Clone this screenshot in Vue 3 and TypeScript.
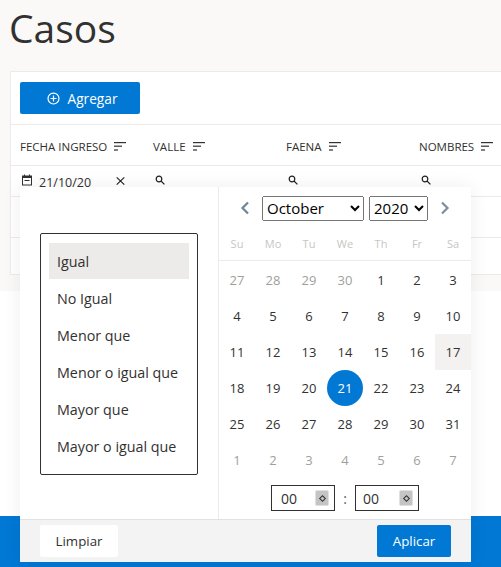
<script setup lang="ts">
const columns: string[] = ['FECHA INGRESO', 'VALLE', 'FAENA', 'NOMBRES']
const operators: string[] = ['Igual', 'No Igual', 'Menor que', 'Menor o igual que', 'Mayor que', 'Mayor o igual que']
const weekdays: string[] = ['Su', 'Mo', 'Tu', 'We', 'Th', 'Fr', 'Sa']
const months: string[] = ['January', 'February', 'March', 'April', 'May', 'June', 'July', 'August', 'September', 'October', 'November', 'December']
const years: number[] = [2018, 2019, 2020, 2021, 2022]

interface Day { n: number; muted: boolean; selected: boolean; today: boolean }
const days: Day[] = [
  ...[27, 28, 29, 30].map((n) => ({ n, muted: true, selected: false, today: false })),
  ...Array.from({ length: 31 }, (_, i) => ({ n: i + 1, muted: false, selected: i + 1 === 21, today: i + 1 === 17 })),
  ...[1, 2, 3, 4, 5, 6, 7].map((n) => ({ n, muted: true, selected: false, today: false })),
]
</script>

<template>
  <div class="page">
    <section class="top">
      <h1 class="title">Casos</h1>
      <div class="card">
        <div class="toolbar">
          <button class="btn primary add">
            <svg width="13" height="13" viewBox="0 0 14 14" fill="none" stroke="currentColor" stroke-width="1.3">
              <circle cx="7" cy="7" r="5.9" />
              <path d="M7 3.8v6.4M3.8 7h6.4" />
            </svg>
            Agregar
          </button>
        </div>
        <div class="row head">
          <div v-for="c in columns" :key="c" class="cell">
            <span>{{ c }}</span>
            <svg class="sort" width="12" height="9" viewBox="0 0 12 9" fill="#323130">
              <rect x="0" y="0" width="12" height="1.2" />
              <rect x="0" y="3.6" width="8" height="1.2" />
              <rect x="0" y="7.4" width="4" height="1.2" />
            </svg>
          </div>
        </div>
        <div class="row filter">
          <div class="cell date">
            <svg width="10" height="12" viewBox="0 0 10 12" fill="none">
              <rect x="0.5" y="2" width="9" height="9" stroke="#323130" stroke-width="1" />
              <rect x="0.5" y="2" width="9" height="2" fill="#323130" />
              <path d="M2.5 .5v1.5M7.5 .5v1.5" stroke="#323130" />
              <path d="M2.5 6.5h5" stroke="#323130" stroke-width="1" />
            </svg>
            <span class="date-text">21/10/20</span>
            <svg class="clear" width="9" height="8" viewBox="0 0 9 8" stroke="#201f1e" stroke-width="1.1">
              <path d="M.7.4l7.6 7.2M8.3.4L.7 7.6" />
            </svg>
          </div>
          <div v-for="i in 3" :key="i" class="cell">
            <svg class="search" width="10" height="10" viewBox="0 0 10 10" fill="none" stroke="#201f1e" stroke-width="1.2">
              <circle cx="4" cy="4" r="2.8" />
              <path d="M6 6l3.4 3.4" />
            </svg>
          </div>
        </div>
        <div class="row blank"></div>
        <div class="row last"></div>
      </div>
    </section>
    <section class="middle"></section>
    <section class="bar"></section>

    <div class="popup">
      <div class="popup-body">
        <div class="ops-pane">
          <ul class="ops">
            <li v-for="(o, i) in operators" :key="o" :class="{ active: i === 0 }">{{ o }}</li>
          </ul>
        </div>
        <div class="cal">
          <div class="nav">
            <svg width="10" height="14" viewBox="0 0 10 14" fill="none" stroke="#6f8699" stroke-width="2.2">
              <path d="M8 1.5L2.5 7 8 12.5" />
            </svg>
            <select class="month">
              <option v-for="(m, i) in months" :key="m" :selected="i === 9">{{ m }}</option>
            </select>
            <select class="year">
              <option v-for="y in years" :key="y" :selected="y === 2020">{{ y }}</option>
            </select>
            <svg width="10" height="14" viewBox="0 0 10 14" fill="none" stroke="#7d8f9e" stroke-width="2.2">
              <path d="M2 1.5L7.5 7 2 12.5" />
            </svg>
          </div>
          <div class="weekdays">
            <span v-for="w in weekdays" :key="w">{{ w }}</span>
          </div>
          <div class="days">
            <span
              v-for="(d, i) in days"
              :key="i"
              class="day"
              :class="{ muted: d.muted, selected: d.selected, today: d.today }"
            >{{ d.n }}</span>
          </div>
          <div class="time">
            <div class="spin hours"><span>00</span><i class="stepper"><b></b></i></div>
            <span class="colon">:</span>
            <div class="spin minutes"><span>00</span><i class="stepper"><b></b></i></div>
          </div>
        </div>
      </div>
      <div class="footer">
        <button class="btn plain">Limpiar</button>
        <button class="btn primary apply">Aplicar</button>
      </div>
    </div>
  </div>
</template>

<style>
html, body { margin: 0; padding: 0; }
</style>

<style scoped>
.page {
  position: relative;
  width: 501px;
  height: 567px;
  overflow: hidden;
  display: flex;
  flex-direction: column;
  font-family: "Open Sans", "Noto Sans", sans-serif;
  color: #323130;
  font-size: 14px;
  background: #fff;
}
.top { height: 291px; box-sizing: border-box; background: #faf9f8; padding: 0 0 0 10px; overflow: hidden; }
.title { margin: 0 0 0 -1px; height: 71px; box-sizing: border-box; font-size: 39px; font-weight: 400; line-height: 56px; }
.middle { height: 225px; background: #fff; }
.bar { flex: 1; background: #0078d4; }
.card { width: 560px; height: 204px; box-sizing: border-box; background: #fff; border: 1px solid #edebe9; }
.toolbar { height: 52px; box-sizing: border-box; padding: 10px 0 0 9px; }
.btn { border: 0; border-radius: 2px; font: inherit; display: inline-flex; align-items: center; justify-content: center; height: 32px; padding: 0; }
.primary { background: #0078d4; color: #fff; }
.add { width: 120px; gap: 8px; padding-left: 4px; box-sizing: border-box; font-size: 13.7px; }
.row { display: grid; grid-template-columns: repeat(4, 133px); border-top: 1px solid #edebe9; box-sizing: border-box; padding-left: 9px; }
.cell { display: flex; align-items: center; min-width: 0; }
.head { height: 41px; font-size: 11.5px; white-space: nowrap; }
.head .cell { padding-top: 2px; }
.sort { margin-left: 7px; }
.filter { height: 31px; font-size: 12.5px; }
.filter .cell { padding: 0 0 3px 2px; }
.date-text { margin: 6px 0 0 7px; }
.clear { margin: 2px 0 0 25px; }
.blank { height: 41px; }
.last { height: 38px; }
.popup {
  position: absolute;
  left: 20px;
  top: 187px;
  width: 451px;
  height: 375px;
  display: flex;
  flex-direction: column;
  background: #fff;
  box-shadow: 0 0 18px rgba(0, 0, 0, 0.07);
}
.popup-body { flex: 1; display: flex; min-height: 0; }
.ops-pane { width: 198px; border-right: 1px solid #edebe9; display: flex; align-items: center; justify-content: center; padding-top: 2px; box-sizing: content-box; height: 330px; }
.ops { list-style: none; margin: 0; padding: 9px 8px; width: 140px; border: 1px solid #323130; border-radius: 2px; }
.ops li { height: 37px; box-sizing: border-box; line-height: 36px; padding: 1px 0 0 8px; font-size: 14.3px; white-space: nowrap; }
.ops li.active { background: #edebe9; height: 36px; margin-bottom: 1px; }
.cal { width: 252px; display: flex; flex-direction: column; }
.nav { height: 42px; margin-bottom: 1px; display: flex; align-items: center; padding: 0 21px; box-sizing: border-box; }
.month { width: 102px; height: 25px; margin-left: 12px; font-family: inherit; font-size: 15px; }
.year { width: 59px; height: 25px; margin: 0 12px 0 5px; font-family: inherit; font-size: 15px; }
.weekdays { height: 31px; padding-bottom: 3px; display: grid; grid-template-columns: repeat(7, 36px); align-items: center; text-align: center; font-size: 11px; color: #c8c6c4; border-bottom: 1px solid #edebe9; box-sizing: border-box; }
.days { display: grid; grid-template-columns: repeat(7, 36px); grid-auto-rows: 36px; margin-top: 1px; }
.day { display: flex; align-items: center; justify-content: center; font-size: 13px; }
.day.muted { color: #a19f9d; }
.day.today { background: #f3f2f1; }
.day.selected { background: #0078d4; color: #fff; border-radius: 50%; }
.time { display: flex; justify-content: center; align-items: center; gap: 8px; margin-top: 7px; }
.colon { width: 4px; text-align: center; color: #605e5c; }
.spin { width: 64px; height: 26px; box-sizing: border-box; border: 1px solid #323130; display: flex; align-items: center; justify-content: space-between; padding-right: 5px; }
.hours { padding-left: 9px; }
.minutes { padding-left: 7px; }
.stepper { width: 14px; height: 16px; box-sizing: border-box; background: #c4c4c4; border: 1px solid #e0e0e0; display: flex; align-items: center; justify-content: center; border-radius: 2px; }
.stepper b { width: 3px; height: 3px; border: 1.5px solid #323130; transform: rotate(45deg); }
.footer { height: 43px; box-sizing: border-box; background: #f3f3f3; border-top: 1px solid #e1e1e1; display: flex; justify-content: space-between; align-items: center; padding: 0 20px; }
.plain { width: 78px; background: #fff; color: #323130; font-size: 13.3px; }
.apply { width: 74px; font-size: 13.3px; }
</style>
